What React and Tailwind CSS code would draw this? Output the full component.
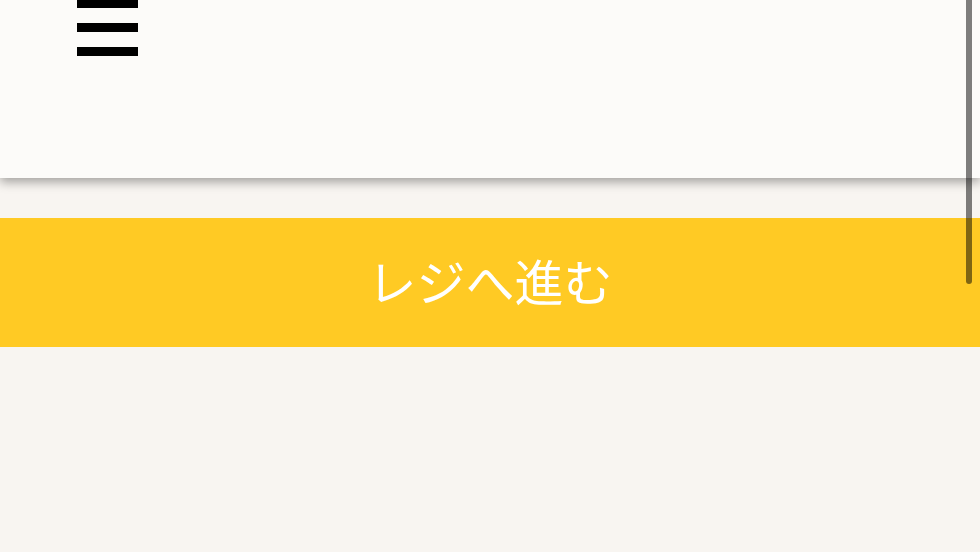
const Bar = () => <div className="h-[9px] w-[61px] bg-black" />;

const App = () => {
    return (
        <div className="relative h-[552px] w-[980px] overflow-hidden bg-[#f8f5f1]" style={{ fontFamily: '"Noto Sans CJK JP", "Noto Sans", sans-serif' }}>
            {/* header */}
            <header className="relative z-10 flow-root h-[178px] bg-[#fcfbf9] shadow-[0_4px_10px_rgba(0,0,0,0.35)]">
                <div className="-mt-[1px] ml-[77px] flex flex-col gap-[15px]">
                    <Bar />
                    <Bar />
                    <Bar />
                </div>
            </header>

            <main className="pt-[40px]">
                <button className="flex h-[129px] w-full items-center justify-center bg-[#ffca24] pb-[6px] text-[49px] text-white">
                    レジへ進む
                </button>
            </main>

            {/* overlay scrollbar */}
            <div className="absolute right-[8px] top-0 z-20 h-[284px] w-[6px] rounded-b-full bg-black/50" />
        </div>
    );
};

export default App;
